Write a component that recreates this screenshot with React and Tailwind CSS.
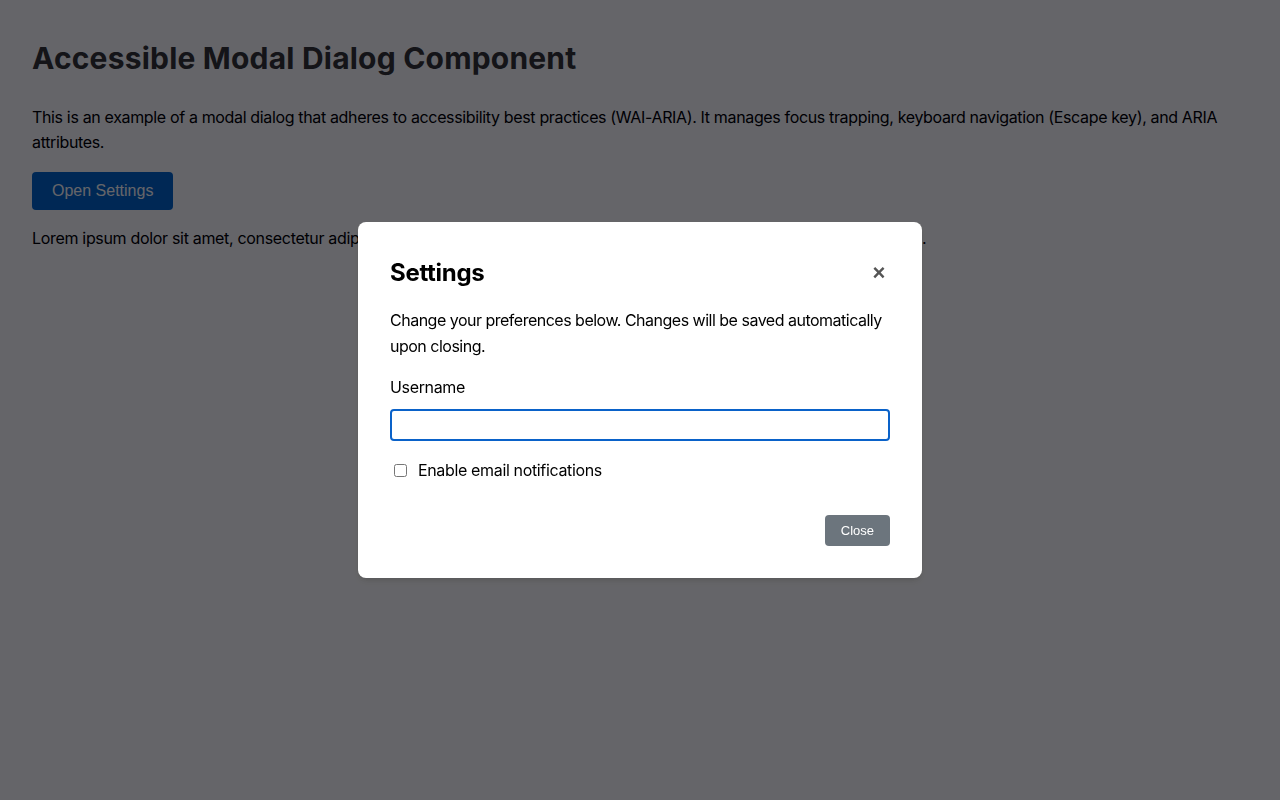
import { useState } from 'react';

export default function App() {
  const [open, setOpen] = useState(true);
  const [username, setUsername] = useState('');
  const [notify, setNotify] = useState(false);

  return (
    <div className="min-h-screen bg-white text-black" style={{ fontFamily: 'Inter, "Noto Sans", sans-serif' }}>
      <main className="p-8 tracking-[-0.35px]">
        <h1 className="mt-[8px] text-[30px] font-bold leading-[36px] tracking-[0.2px] text-[#333]">
          Accessible Modal Dialog Component
        </h1>
        <p className="mt-[29px] text-[16px] leading-[25px]">
          This is an example of a modal dialog that adheres to accessibility best practices (WAI-ARIA). It manages focus
          trapping, keyboard navigation (Escape key), and ARIA attributes.
        </p>
        <button
          onClick={() => setOpen(true)}
          className="mt-[17px] h-[38px] rounded-[4px] bg-[#0066cc] px-5 text-[16px] tracking-normal text-white"
          style={{ fontFamily: '"Liberation Sans", Arial, sans-serif' }}
        >
          Open Settings
        </button>
        <p className="mt-[16px] text-[16px] leading-[25px] tracking-[-0.32px]">
          Lorem ipsum dolor sit amet, consectetur adipiscing elit. Sed do eiusmod tempor incididunt ut labore et dolore magna aliqua.
        </p>
      </main>

      {open && (
        <div className="fixed inset-0 z-50 flex items-center justify-center bg-[rgba(0,0,6,0.605)]">
          <div
            role="dialog"
            aria-modal="true"
            aria-labelledby="settings-title"
            className="w-[564px] rounded-[8px] bg-white p-8 tracking-[-0.35px] shadow-md"
          >
            <div className="flex items-center justify-between">
              <h2 id="settings-title" className="text-[24px] font-bold leading-[38px] tracking-[-0.3px]">
                Settings
              </h2>
              <button
                onClick={() => setOpen(false)}
                aria-label="Close"
                className="mr-[5px] text-[22px] font-bold leading-none text-[#555]"
                style={{ fontFamily: '"Liberation Sans", Arial, sans-serif' }}
              >
                ×
              </button>
            </div>
            <p className="mt-[15px] text-[16px] leading-[26px] tracking-[-0.5px]">
              Change your preferences below. Changes will be saved automatically upon closing.
            </p>
            <label htmlFor="username" className="mt-[16px] block text-[16px] leading-[24px]">
              Username
            </label>
            <input
              id="username"
              value={username}
              onChange={(e) => setUsername(e.target.value)}
              className="mt-[10px] block h-[32px] w-full rounded-[4px] border-2 border-[#0a62c9] px-2 outline-none"
            />
            <label className="mt-[17px] flex items-center text-[16px] leading-[24px]">
              <input
                type="checkbox"
                checked={notify}
                onChange={(e) => setNotify(e.target.checked)}
                className="ml-[4px] mr-[11px] h-[13px] w-[13px]"
              />
              Enable email notifications
            </label>
            <div className="mt-[33px] flex justify-end">
              <button
                onClick={() => setOpen(false)}
                className="h-[31px] rounded-[4px] bg-[#6c757d] px-[16px] text-[13px] tracking-normal text-white"
                style={{ fontFamily: '"Liberation Sans", Arial, sans-serif' }}
              >
                Close
              </button>
            </div>
          </div>
        </div>
      )}
    </div>
  );
}
